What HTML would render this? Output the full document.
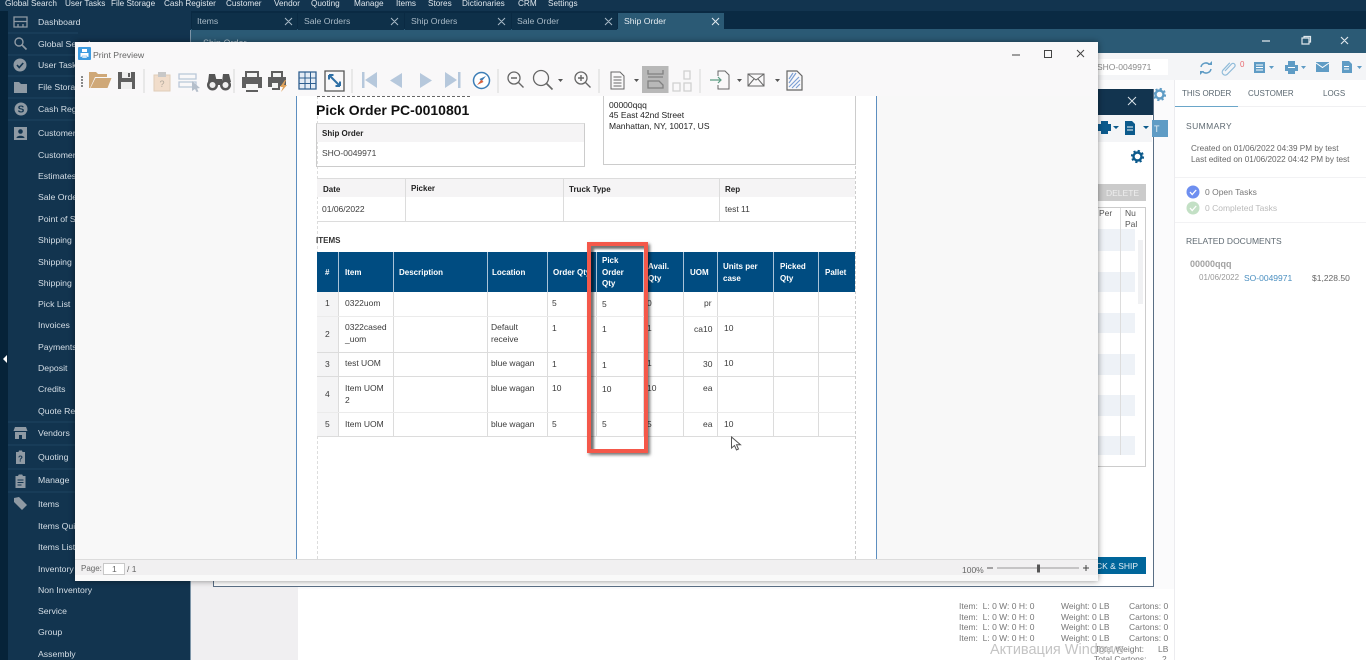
<!DOCTYPE html>
<html><head><meta charset="utf-8"><title>Print Preview</title>
<style>
html,body{margin:0;padding:0;width:1366px;height:660px;overflow:hidden;background:#fff}
body{position:relative;font-family:"Liberation Sans",sans-serif}
div,span,svg{position:absolute}
#w{left:0;top:0;width:1366px;height:660px;overflow:hidden;filter:blur(.3px)}
.t{white-space:nowrap;line-height:12px}
.m{color:#dfe6ec;font-size:8.2px;top:-2px}
.s{color:#d5dee6;font-size:8.7px;left:38px}
.tab{top:13px;height:17px;background:#0e3049}
.tabt{color:#a9bac7;font-size:8.7px;top:15px}
.h{color:#fff;font-size:8px;font-weight:bold;line-height:11.5px;white-space:nowrap}
.c{color:#3a3a3a;font-size:8.5px;line-height:11.5px;white-space:nowrap}
.g{color:#777;font-size:8.5px;white-space:nowrap;line-height:12px}
.r{color:#666;font-size:8.2px}
.b{background:#dcdcdc}
</style></head><body><div id="w">

<!-- app chrome -->
<div style="left:0;top:0;width:1366px;height:11px;background:#12344f"></div>
<div style="left:0;top:11px;width:1366px;height:19px;background:#0a2a43"></div>
<div style="left:191px;top:29px;width:1175px;height:24px;background:#2b5a75"></div>
<span class="t m" style="left:5px">Global Search</span><span class="t m" style="left:65px">User Tasks</span><span class="t m" style="left:111px">File Storage</span><span class="t m" style="left:164px">Cash Register</span><span class="t m" style="left:226px">Customer</span><span class="t m" style="left:274px">Vendor</span><span class="t m" style="left:311px">Quoting</span><span class="t m" style="left:354px">Manage</span><span class="t m" style="left:396px">Items</span><span class="t m" style="left:428px">Stores</span><span class="t m" style="left:462px">Dictionaries</span><span class="t m" style="left:518px">CRM</span><span class="t m" style="left:548px">Settings</span>

<div class="tab" style="left:192px;width:105px"></div><div class="tab" style="left:298px;width:106px"></div><div class="tab" style="left:405px;width:106px"></div><div class="tab" style="left:512px;width:105px"></div><div class="tab" style="left:618px;width:106px;background:#2b5a75"></div>
<span class="t tabt" style="left:197px">Items</span><span class="t tabt" style="left:304px">Sale Orders</span><span class="t tabt" style="left:411px">Ship Orders</span><span class="t tabt" style="left:517px">Sale Order</span><span class="t tabt" style="left:624px;color:#e4ebf0">Ship Order</span>
<svg style="left:0;top:0" width="760" height="30" stroke="#a9bac7" stroke-width="1" fill="none"><path d="M285 18l7 7m0-7l-7 7M391 18l7 7m0-7l-7 7M498 18l7 7m0-7l-7 7M605 18l7 7m0-7l-7 7"/><path stroke="#e4ebf0" d="M712 18l7 7m0-7l-7 7"/></svg>
<span class="t" style="left:203px;top:37px;color:#b9c9d4;font-size:9px">Ship Order</span>

<!-- sidebar -->
<div style="left:0;top:11px;width:8px;height:649px;background:#062339"></div>
<div style="left:8px;top:11px;width:183px;height:649px;background:#12344f"></div>
<div style="left:190px;top:30px;width:1px;height:630px;background:#7d95a8"></div>
<svg style="left:2px;top:355px" width="6" height="9"><path d="M5 0v8L1 4z" fill="#fff"/></svg>
<span class="t s" style="top:16px">Dashboard</span><span class="t s" style="top:38px">Global Search</span><span class="t s" style="top:59px">User Tasks</span><span class="t s" style="top:81px">File Storage</span><span class="t s" style="top:103px">Cash Register</span><span class="t s" style="top:127px">Customers</span><span class="t s" style="top:149px">Customers</span><span class="t s" style="top:170px">Estimates</span><span class="t s" style="top:191px">Sale Orders</span><span class="t s" style="top:213px">Point of Sale</span><span class="t s" style="top:234px">Shipping</span><span class="t s" style="top:256px">Shipping</span><span class="t s" style="top:277px">Shipping</span><span class="t s" style="top:298px">Pick List</span><span class="t s" style="top:319px">Invoices</span><span class="t s" style="top:341px">Payments</span><span class="t s" style="top:362px">Deposit</span><span class="t s" style="top:383px">Credits</span><span class="t s" style="top:405px">Quote Requests</span><span class="t s" style="top:427px">Vendors</span><span class="t s" style="top:451px">Quoting</span><span class="t s" style="top:474px">Manage</span><span class="t s" style="top:498px">Items</span><span class="t s" style="top:520px">Items Quick</span><span class="t s" style="top:541px">Items List</span><span class="t s" style="top:563px">Inventory</span><span class="t s" style="top:584px">Non Inventory</span><span class="t s" style="top:605px">Service</span><span class="t s" style="top:626px">Group</span><span class="t s" style="top:648px">Assembly</span>
<svg style="left:8px;top:11px" width="70" height="520" fill="#8f9aa4">
<path d="M0 22H182M0 44H182M0 65H182M0 87H182M0 109H182M0 411H182M0 434H182M0 458H182M0 481H182" stroke="#1e4460" fill="none"/>
<g transform="translate(0 -11)">
<path d="M6 17h13v10H6zM6 21.500h13M10 24v3M15 24v3" fill="none" stroke="#8f9aa4" stroke-width="1.300"/>
<circle cx="11" cy="42" r="4" fill="none" stroke="#8f9aa4" stroke-width="1.400"/><path d="M14 45l4.500 4.500" stroke="#8f9aa4" stroke-width="1.600"/>
<circle cx="12" cy="65" r="6.500"/><path d="M9 65l2.200 2.500 4-4.500" stroke="#12344f" stroke-width="1.600" fill="none"/>
<path d="M6 82h5l2 2h6v9H6z"/>
<circle cx="13" cy="109" r="6.500"/><text x="13" y="112.500" font-size="10" font-weight="bold" text-anchor="middle" fill="#12344f" font-family="Liberation Sans">S</text>
<path d="M6 127h13v13H6z"/><circle cx="12.500" cy="131.500" r="2.300" fill="#12344f"/><path d="M8.500 138c0-3 8-3 8 0z" fill="#12344f"/>
<path d="M7 427h11l1.500 4H5.500zM7 432h11v7h-4v-4h-3v4H7z"/>
<path d="M8 452h2.500l.5-1.500h3l.5 1.500H17v12H8z"/><text x="12.500" y="461.500" font-size="8" font-weight="bold" text-anchor="middle" fill="#12344f" font-family="Liberation Sans">?</text>
<path d="M7.500 476h2.500l.8-1.500h3.400L15 476h2.500v12h-10z"/><path d="M9.500 480h6M9.500 482.500h6M9.500 485h4" stroke="#12344f"/>
<path d="M6 498l5-1 8 8-5 5-8-8z"/>
</g></svg>

<!-- main background -->
<div style="left:191px;top:53px;width:107px;height:607px;background:#f0eff1"></div>
<div style="left:298px;top:53px;width:876px;height:536px;background:#fbfbfc"></div>
<div style="left:191px;top:53px;width:1175px;height:27px;background:#f4f5f7"></div>
<div style="left:1174px;top:53px;width:192px;height:607px;background:#fff;border-left:1px solid #ececef"></div>
<div style="left:1174px;top:53px;width:192px;height:27px;background:#f4f5f7"></div>
<div style="left:1098px;top:59px;width:70px;height:16px;background:#fff"></div>
<span class="t" style="left:1097px;top:61px;color:#8a8a8a;font-size:8.500px">SHO-0049971</span>
<svg style="left:1258px;top:34px" width="100" height="14" stroke="#dfe7ec" fill="none" stroke-width="1.200"><path d="M4 7h8M44 4h7v6h-7zM46 4V2.500h6.500V8H51M83 3l7 7m0-7l-7 7"/></svg>
<svg style="left:1198px;top:58px" width="168" height="20"><g fill="#5f9cc5" stroke="none">
<path d="M56 4h11v11H56z"/><path d="M87 7h3V3h7v4h3v6h-3v3h-7v-3h-3z"/><path d="M118 4h13v10h-13z"/><path d="M144 3h7l3 3v9h-10z"/>
<path d="M71 8h5l-2.500 3zM103 8h5l-2.500 3zM159 8h5l-2.500 3z"/></g>
<path d="M3 9a5 5 0 0 1 8.500-2.500M13 11a5 5 0 0 1-8.500 2.500" fill="none" stroke="#5f9cc5" stroke-width="1.500"/><path d="M10 7h4V3zM6 13H2v4z" fill="#5f9cc5"/>
<path d="M27 13l6.500-7a2 2 0 0 1 3 3l-7.500 7.500a3 3 0 0 1-4.200-4.200l7-7.500" fill="none" stroke="#8fbbd9" stroke-width="1.200"/>
<path d="M58 7h7M58 9.500h7M58 12h7M146 8.500h5M146 11h5" stroke="#fff"/><path d="M118 5l6.500 4.500 6.500-4.500" stroke="#fff" fill="none"/><path d="M90 9h7v1h-7z" fill="#fff"/></svg>
<span class="t" style="left:1240px;top:59px;color:#e8696f;font-size:8px">0</span>
<svg style="left:1152px;top:87px" width="16" height="16" fill="none" stroke="#5f9cc5"><circle cx="7.500" cy="7.500" r="4" stroke-width="2.400"/><circle cx="7.500" cy="7.500" r="5.500" stroke-width="2.200" stroke-dasharray="2.160 2.160"/></svg>

<!-- right panel -->
<span class="t" style="left:1182px;top:88px;color:#5b6871;font-size:8px">THIS ORDER</span><span class="t" style="left:1248px;top:88px;color:#5b6871;font-size:8px">CUSTOMER</span><span class="t" style="left:1323px;top:88px;color:#5b6871;font-size:8px">LOGS</span>
<div style="left:1175px;top:106px;width:191px;height:1px;background:#f0f0f2"></div><div style="left:1175px;top:106px;width:63px;height:1px;background:#6aa6c9"></div>
<span class="t" style="left:1186px;top:120px;color:#5f6a72;font-size:8.500px;letter-spacing:.4px">SUMMARY</span>
<span class="t r" style="left:1191px;top:143px">Created on 01/06/2022 04:39 PM by test</span>
<span class="t r" style="left:1191px;top:154px">Last edited on 01/06/2022 04:42 PM by test</span>
<div style="left:1175px;top:177px;width:191px;height:1px;background:#f2f2f4"></div>
<svg style="left:1186px;top:185px" width="16" height="30"><circle cx="7" cy="7" r="6.500" fill="#6e8ff0"/><path d="M4 7l2.200 2.500 4-4.500" stroke="#fff" stroke-width="1.300" fill="none"/><circle cx="7" cy="23" r="6.500" fill="#c3e0c5"/><path d="M4 23l2.200 2.500 4-4.500" stroke="#fff" stroke-width="1.300" fill="none"/></svg>
<span class="t" style="left:1205px;top:186px;color:#777;font-size:8.500px">0 Open Tasks</span><span class="t" style="left:1205px;top:202px;color:#bbb;font-size:8.500px">0 Completed Tasks</span>
<div style="left:1175px;top:222px;width:191px;height:1px;background:#f2f2f4"></div>
<span class="t" style="left:1186px;top:235px;color:#5f6a72;font-size:8.500px">RELATED DOCUMENTS</span>
<span class="t" style="left:1190px;top:258px;color:#8a8a8a;font-size:9px;font-weight:bold;opacity:.8">00000qqq</span>
<span class="t" style="left:1199px;top:272px;color:#999;font-size:8px">01/06/2022</span><span class="t" style="left:1244px;top:272px;color:#4a8fc0;font-size:8.500px">SO-0049971</span><span class="t" style="left:1312px;top:272px;color:#666;font-size:8.500px">$1,228.50</span>

<!-- underlying dialog -->
<div style="left:213px;top:89px;width:939px;height:497px;background:#fff;border:1px solid #5a6f85;border-top:0"></div>
<div style="left:1098px;top:89px;width:55px;height:26px;background:#12344f"></div>
<svg style="left:1127px;top:96px" width="11" height="11" stroke="#dbe3e9"><path d="M1 1l8 8m0-8l-8 8"/></svg>
<div style="left:1098px;top:115px;width:54px;height:27px;background:#f4f5f7"></div>
<div style="left:1152px;top:120px;width:16px;height:17px;background:#5f9cc5"></div><span class="t" style="left:1154px;top:123px;color:#e3eef5;font-size:9px">T</span>
<svg style="left:1098px;top:120px" width="54" height="16" fill="#0c5a8c"><path d="M0 4h3V1h7v3h3v7h-3v3H3v-3H0z"/><path d="M15 6h6l-3 3zM45 6h6l-3 3z"/><path d="M27 1h7l3 3v11H27z"/><path d="M29 7h6M29 10h6" stroke="#f4f5f7"/></svg>
<svg style="left:1130px;top:149px" width="15" height="15" fill="none" stroke="#0c5a8c"><circle cx="7.500" cy="7.500" r="4" stroke-width="2.400"/><circle cx="7.500" cy="7.500" r="5.500" stroke-width="2.200" stroke-dasharray="2.160 2.160"/></svg>
<div style="left:1098px;top:184px;width:48px;height:17px;background:#cbcbcb"></div><span class="t" style="left:1106px;top:187px;color:#eee;font-size:8.500px">DELETE</span>
<div style="left:1098px;top:207px;width:47px;height:258px;background:#fff;border:1px solid #ccc;border-left:0"></div>
<span class="c" style="left:1099px;top:208px;color:#555">Per</span><span class="c" style="left:1125px;top:208px;color:#555">Nu</span><span class="c" style="left:1125px;top:219px;color:#555">Pal</span>
<div style="left:1098px;top:229px;width:37px;height:22px;background:#eef2f7"></div><div style="left:1098px;top:272px;width:37px;height:20px;background:#eef2f7"></div><div style="left:1098px;top:313px;width:37px;height:20px;background:#eef2f7"></div><div style="left:1098px;top:354px;width:37px;height:21px;background:#eef2f7"></div><div style="left:1098px;top:395px;width:37px;height:21px;background:#eef2f7"></div><div style="left:1098px;top:436px;width:37px;height:19px;background:#eef2f7"></div>
<div style="left:1120px;top:208px;width:1px;height:247px;background:#ddd"></div>
<div style="left:1138px;top:240px;width:5px;height:64px;background:#f0f1f3"></div>
<div style="left:1098px;top:557px;width:48px;height:17px;background:#00669b"></div><span class="t" style="left:1096px;top:560px;color:#e6f0f6;font-size:8.500px">CK &amp; SHIP</span>

<!-- bottom figures -->
<span class="g" style="left:959px;top:600px">Item:&nbsp; L: 0 W: 0 H: 0</span><span class="g" style="left:1061px;top:600px">Weight: 0 LB</span><span class="g" style="left:1129px;top:600px">Cartons: 0</span>
<span class="g" style="left:959px;top:611px">Item:&nbsp; L: 0 W: 0 H: 0</span><span class="g" style="left:1061px;top:611px">Weight: 0 LB</span><span class="g" style="left:1129px;top:611px">Cartons: 0</span>
<span class="g" style="left:959px;top:621px">Item:&nbsp; L: 0 W: 0 H: 0</span><span class="g" style="left:1061px;top:621px">Weight: 0 LB</span><span class="g" style="left:1129px;top:621px">Cartons: 0</span>
<span class="g" style="left:959px;top:632px">Item:&nbsp; L: 0 W: 0 H: 0</span><span class="g" style="left:1061px;top:632px">Weight: 0 LB</span><span class="g" style="left:1129px;top:632px">Cartons: 0</span>
<span class="g" style="left:1095px;top:643px">Total Weight:</span><span class="g" style="left:1158px;top:643px">LB</span>
<span class="g" style="left:1094px;top:653px">Total Cartons:</span><span class="g" style="left:1162px;top:653px">2</span>
<span class="t" style="left:990px;top:642px;color:#c4c4c4;font-size:14.500px;line-height:16px">Активация Windows</span>

<!-- print preview window -->
<div style="left:75px;top:42px;width:1023px;height:539px;background:#f8f8f8;box-shadow:0 0 6px rgba(0,0,0,.45);overflow:hidden">
  <div style="left:0;top:0;width:1023px;height:54px;background:#f9f8f9"></div>
  <span class="t" style="left:18px;top:7px;color:#666;font-size:8.700px">Print Preview</span>
  <div style="left:222px;top:54px;width:579px;height:463px;background:#fff;border-left:1px solid #5d8fc0;border-right:1px solid #5d8fc0;margin-left:-1px"></div>
  <div style="left:0;top:517px;width:1023px;height:1px;background:#dcdcdc"></div>
  <div style="left:0;top:518px;width:1023px;height:15px;background:#f1f0f1"></div>
  <div style="left:0;top:533px;width:1023px;height:6px;background:#f9f9f9"></div>
  <span class="t" style="left:6px;top:521px;color:#666;font-size:8px">Page:</span>
  <div style="left:28px;top:521px;width:20px;height:10px;background:#fff;border:1px solid #c8c8c8"></div>
  <span class="t" style="left:37px;top:521px;color:#666;font-size:8.500px">1</span><span class="t" style="left:52px;top:521px;color:#666;font-size:8.500px">/ 1</span>
  <span class="t" style="left:887px;top:522px;color:#666;font-size:8.500px">100%</span>
  <svg style="left:910px;top:519px" width="105" height="14"><path d="M2 7h6" stroke="#555"/><path d="M12 7h82" stroke="#999"/><rect x="52" y="3.500" width="3" height="8" fill="#555"/><path d="M98 7h6M101 4v6" stroke="#444"/></svg>
</div>
<svg style="left:78px;top:47px" width="13" height="13"><rect width="13" height="13" rx="1" fill="#3d9be0"/><path d="M4 2h5v3H4zM2.500 6h8v4h-8z" fill="#fff"/><path d="M4 9h5v2H4z" fill="#fff" stroke="#3d9be0" stroke-width=".5"/></svg>
<svg style="left:1005px;top:47px" width="90" height="14" stroke="#444" fill="none"><path d="M7 8h8M39.500 3.500h7v7h-7zM72 3l7 7m0-7l-7 7"/></svg>

<!-- toolbar icons -->
<svg style="left:78px;top:66px" width="740" height="30" fill="none">
<g fill="#888"><rect x="3" y="10" width="2" height="2"/><rect x="3" y="13" width="2" height="2"/><rect x="3" y="16" width="2" height="2"/><rect x="3" y="19" width="2" height="2"/></g>
<path d="M66 3v24M156 3v24M274 3v24M420 3v24M521 3v24M622 3v24" stroke="#d8d8d8"/>
<path d="M11 22V6h7l2 2h9v3H17l-5 11zM12.500 22l5-10h16l-4 10z" fill="#cfa878"/>
<path d="M40 6h17v17H40z" fill="#5f5f5f"/><path d="M44 6h9v6h-9z" fill="#eee"/><path d="M43 16h11v7H43z" fill="#eee"/><path d="M50 7h2v4h-2z" fill="#5f5f5f"/>
<path d="M76 9h16v16H76z" fill="#f1ddcb" stroke="#e0cdb8"/><path d="M80 6h8v5h-8z" fill="#c8c8c8"/><text x="84" y="21" font-size="9" fill="#b0a89c" text-anchor="middle" font-family="Liberation Sans">?</text>
<path d="M101 8h17v5h-17zM101 16h17v5h-17z" stroke="#b9c7d8" stroke-width="1.300"/><path d="M114 15l8 7-3 .5 1.500 3-2 .5-1.500-3-3 2z" fill="#b5bfcb"/>
<circle cx="134.500" cy="19" r="5.500" fill="#555"/><circle cx="147.500" cy="19" r="5.500" fill="#555"/><path d="M131 8h6l2 8h-9zM145 8h6l2 8h-9zM138 13h6v6h-6z" fill="#555"/><circle cx="134.500" cy="19" r="3" fill="#eee"/><circle cx="147.500" cy="19" r="3" fill="#eee"/>
<g transform="translate(-4 0)"><path d="M168 11h3V5h14v6h3v11h-4v4h-12v-4h-4z" fill="#5f5f5f"/><path d="M173 7h10v4h-10zM172 18h12v6h-12z" fill="#f5f5f5"/>
<path d="M194 11h3V5h12v6h3v9h-6v4h-8v-3h-4z" fill="#5f5f5f"/><path d="M199 7h8v4h-8zM198 17h6v5h-6z" fill="#f5f5f5"/><path d="M211 14l-5 7h3l-2 5 6-7h-3l2-5z" fill="#e0a25a"/></g>
<g transform="translate(-3 0)"><path d="M224 6h17v17h-17z" fill="#e4ecf5" stroke="#2f5f90" stroke-width="1.300"/><path d="M230 6v17M235.500 6v17M224 12h17M224 17.500h17" stroke="#2f5f90" stroke-width="1"/></g>
<path d="M247 5h19v20h-19z" stroke="#555" stroke-width="1.300"/><path d="M251 9l11 11M251 9h4.500M251 9v4.500M262 20h-4.500M262 20v-4.500" stroke="#2f6fa5" stroke-width="2"/>
<path d="M284 6v16h2.500V6zM299 6l-12 8 12 8z" fill="#b6c8dc"/>
<path d="M324 7l-12 7.500 12 7.500z" fill="#b6c8dc"/>
<path d="M342 7l12 7.500-12 7.500z" fill="#b6c8dc"/>
<path d="M367 6l12 8-12 8zM380 6v16h2.500V6z" fill="#b6c8dc"/>
<circle cx="403.500" cy="14.500" r="8" fill="#fff" stroke="#3c7db6" stroke-width="1.500"/><path d="M408 10l-6.500 3 2 2.500z" fill="#3c7db6"/><path d="M399 19l6.500-3-2-2.500z" fill="#d9603c"/>
<circle cx="436" cy="12" r="6" stroke="#666" stroke-width="1.300"/><path d="M433 12h6M440.500 16.500l5 5" stroke="#666" stroke-width="1.400"/>
<circle cx="463" cy="12" r="7.500" stroke="#666" stroke-width="1.300"/><path d="M468.500 17.500l6 6" stroke="#666" stroke-width="1.600"/><path d="M480 13h5l-2.500 3z" fill="#555"/>
<circle cx="503" cy="12" r="6" stroke="#666" stroke-width="1.300"/><path d="M500 12h6M503 9v6M507.500 16.500l5 5" stroke="#666" stroke-width="1.400"/>
<path d="M533 6h9l4 4v13h-13zM535.500 11h8M535.500 14h8M535.500 17h8M535.500 20h8" stroke="#666"/><path d="M556 13h5l-2.500 3z" fill="#555"/>
<rect x="564" y="0" width="26.500" height="27" fill="#b8b8b8"/><path d="M570 4v4h15V4M570 22v-7h11l4 4v3zM570 11h15" stroke="#808080" stroke-width="1.300"/>
<path d="M595 17h7v8h-7zM606 17h7v8h-7zM606 5h6v8h-6z" stroke="#d0d0d0" stroke-width="1.300"/>
<path d="M640 10V5h7l4 4v14h-11v-4" stroke="#666"/><path d="M632 14h11m-3-3l3 3-3 3" stroke="#5b9a82" stroke-width="1.200"/><path d="M659 13h5l-2.500 3z" fill="#555"/>
<path d="M670 8h16v12h-16zM670 8l8 6 8-6M670 20l6-7M686 20l-6-7" stroke="#666"/><path d="M697 13h5l-2.500 3z" fill="#555"/>
<path d="M709 5h10l5 5v14h-15z" stroke="#666" stroke-width="1.200"/><path d="M711 21l10-10M711 17l7-10M711 13l4-6M714 22l8-8M718 22l4-4" stroke="#7b9fd4" stroke-width="1.200"/>
</svg>

<!-- page content -->
<div style="left:297px;top:96px;width:579px;height:463px;overflow:hidden">
  <div style="left:20px;top:0;width:0;height:463px;border-left:1px dashed #ddd"></div>
  <div style="left:558px;top:0;width:0;height:463px;border-left:1px dashed #ccc"></div>
  <div style="left:20px;top:0;width:155px;height:1px;background:repeating-linear-gradient(90deg,#666 0 3px,transparent 3px 5px)"></div>
  <span class="t" style="left:19px;top:7px;font-size:14px;font-weight:bold;color:#111;line-height:15px;top:7px;padding-top:0;margin-top:0">Pick Order PC-0010801</span>

  <div style="left:19px;top:27px;width:267px;height:42px;border:1px solid #ccc;border-top:1px solid #ddd"></div>
  <div style="left:20px;top:28px;width:267px;height:18px;background:#f5f4f5"></div>
  <span class="h" style="left:25px;top:32px;color:#222">Ship Order</span>
  <span class="c" style="left:25px;top:52px;color:#444">SHO-0049971</span>

  <div style="left:306px;top:-2px;width:251px;height:70px;border:1px solid #ccc;border-top:0"></div>
  <span class="c" style="left:312px;top:4px;color:#222;line-height:10.300px">00000qqq<br>45 East 42nd Street<br>Manhattan, NY, 10017, US</span>

  <!-- date table -->
  <div style="left:20px;top:82px;width:538px;height:19px;background:#f5f4f5"></div>
  <div class="b" style="left:20px;top:82px;width:538px;height:1px"></div>
  <div class="b" style="left:20px;top:125px;width:538px;height:1px"></div>
  <div class="b" style="left:108px;top:82px;width:1px;height:44px"></div><div class="b" style="left:266px;top:82px;width:1px;height:44px"></div><div class="b" style="left:422px;top:82px;width:1px;height:44px"></div>
  <span class="h" style="left:26px;top:88px;color:#222">Date</span><span class="h" style="left:114px;top:87px;color:#222">Picker</span><span class="h" style="left:272px;top:88px;color:#222">Truck Type</span><span class="h" style="left:428px;top:88px;color:#222">Rep</span>
  <span class="c" style="left:25px;top:108px">01/06/2022</span><span class="c" style="left:428px;top:108px">test 11</span>

  <span class="h" style="left:19px;top:139px;color:#333">ITEMS</span>

  <!-- items header -->
  <div style="left:20px;top:156px;width:538px;height:40px;background:#004c81"></div>
  <div style="left:20px;top:196px;width:22px;height:144px;background:#f4f4f5"></div>
  <div style="left:41px;top:156px;width:1px;height:40px;background:#a9c3d8"></div><div style="left:96px;top:156px;width:1px;height:40px;background:#a9c3d8"></div><div style="left:190px;top:156px;width:1px;height:40px;background:#a9c3d8"></div><div style="left:250px;top:156px;width:1px;height:40px;background:#a9c3d8"></div><div style="left:299px;top:156px;width:1px;height:40px;background:#a9c3d8"></div><div style="left:346px;top:156px;width:1px;height:40px;background:#a9c3d8"></div><div style="left:386px;top:156px;width:1px;height:40px;background:#a9c3d8"></div><div style="left:420px;top:156px;width:1px;height:40px;background:#a9c3d8"></div><div style="left:476px;top:156px;width:1px;height:40px;background:#a9c3d8"></div><div style="left:521px;top:156px;width:1px;height:40px;background:#a9c3d8"></div>
  <div class="b" style="left:41px;top:196px;width:1px;height:144px"></div><div class="b" style="left:96px;top:196px;width:1px;height:144px"></div><div class="b" style="left:190px;top:196px;width:1px;height:144px"></div><div class="b" style="left:250px;top:196px;width:1px;height:144px"></div><div class="b" style="left:299px;top:196px;width:1px;height:144px"></div><div class="b" style="left:346px;top:196px;width:1px;height:144px"></div><div class="b" style="left:386px;top:196px;width:1px;height:144px"></div><div class="b" style="left:420px;top:196px;width:1px;height:144px"></div><div class="b" style="left:476px;top:196px;width:1px;height:144px"></div><div class="b" style="left:521px;top:196px;width:1px;height:144px"></div>
  <div class="b" style="left:20px;top:220px;width:538px;height:1px;background:#ebebeb"></div><div class="b" style="left:20px;top:256px;width:538px;height:1px"></div><div class="b" style="left:20px;top:280px;width:538px;height:1px"></div><div class="b" style="left:20px;top:316px;width:538px;height:1px;background:#ebebeb"></div><div class="b" style="left:20px;top:340px;width:538px;height:1px"></div>

  <span class="h" style="left:28px;top:171px">#</span><span class="h" style="left:48px;top:171px">Item</span><span class="h" style="left:102px;top:171px">Description</span><span class="h" style="left:195px;top:171px">Location</span><span class="h" style="left:256px;top:171px">Order Qty</span>
  <span class="h" style="left:305px;top:159px">Pick<br>Order<br>Qty</span><span class="h" style="left:351px;top:165px">Avail.<br>Qty</span><span class="h" style="left:393px;top:171px">UOM</span><span class="h" style="left:426px;top:165px">Units per<br>case</span><span class="h" style="left:483px;top:165px">Picked<br>Qty</span><span class="h" style="left:528px;top:171px">Pallet</span>

  <span class="c" style="left:28px;top:202px">1</span><span class="c" style="left:48px;top:202px">0322uom</span><span class="c" style="left:255px;top:202px">5</span><span class="c" style="left:305px;top:203px">5</span><span class="c" style="left:350px;top:202px">0</span><span class="c" style="left:407px;top:202px">pr</span>
  <span class="c" style="left:28px;top:233px">2</span><span class="c" style="left:48px;top:226px">0322cased<br>_uom</span><span class="c" style="left:194px;top:226px">Default<br>receive</span><span class="c" style="left:255px;top:227px">1</span><span class="c" style="left:305px;top:228px">1</span><span class="c" style="left:350px;top:227px">1</span><span class="c" style="left:397px;top:228px">ca10</span><span class="c" style="left:427px;top:227px">10</span>
  <span class="c" style="left:28px;top:263px">3</span><span class="c" style="left:48px;top:262px">test UOM</span><span class="c" style="left:194px;top:262px">blue wagan</span><span class="c" style="left:255px;top:263px">1</span><span class="c" style="left:305px;top:264px">1</span><span class="c" style="left:350px;top:262px">1</span><span class="c" style="left:406px;top:263px">30</span><span class="c" style="left:427px;top:262px">10</span>
  <span class="c" style="left:28px;top:293px">4</span><span class="c" style="left:48px;top:287px">Item UOM<br>2</span><span class="c" style="left:194px;top:287px">blue wagan</span><span class="c" style="left:255px;top:287px">10</span><span class="c" style="left:305px;top:288px">10</span><span class="c" style="left:350px;top:287px">10</span><span class="c" style="left:406px;top:287px">ea</span>
  <span class="c" style="left:28px;top:323px">5</span><span class="c" style="left:48px;top:323px">Item UOM</span><span class="c" style="left:194px;top:323px">blue wagan</span><span class="c" style="left:255px;top:323px">5</span><span class="c" style="left:305px;top:323px">5</span><span class="c" style="left:350px;top:323px">5</span><span class="c" style="left:406px;top:323px">ea</span><span class="c" style="left:427px;top:323px">10</span>

  <!-- highlight -->
  <div style="left:290px;top:146px;width:53px;height:203px;border:4px solid #f4584a;box-shadow:2px 2px 3px rgba(0,0,0,.55),inset 3px 3px 2px rgba(0,0,0,.55)"></div>
</div>
<svg style="left:730px;top:436px" width="12" height="16"><path d="M1.500 1v11l3-2.500 2 4.500 2-1-2-4.300h4z" fill="#fff" stroke="#555"/></svg>
</div></body></html>
